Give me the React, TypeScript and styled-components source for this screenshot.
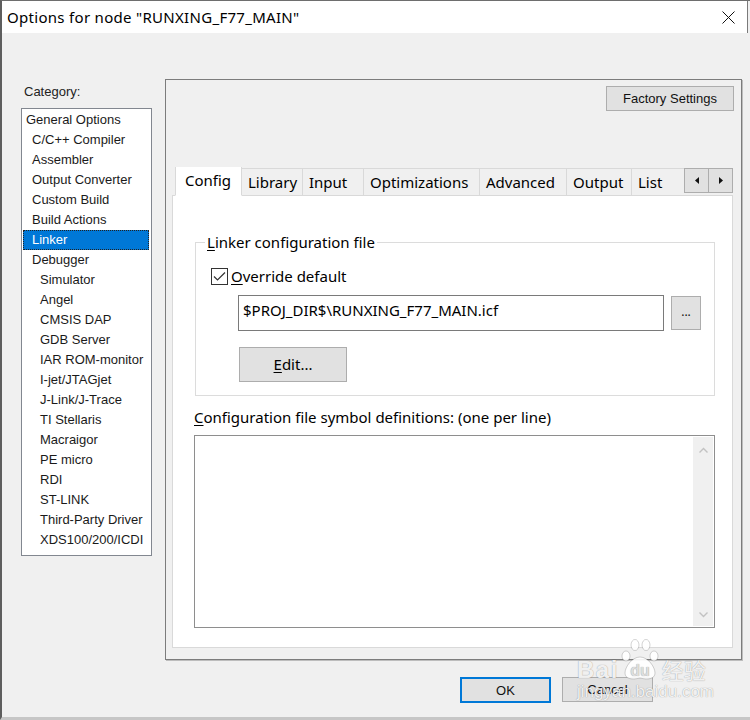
import styled, { createGlobalStyle } from "styled-components";

const GlobalStyle = createGlobalStyle`
  html, body {
    margin: 0;
    padding: 0;
    background: #f0f0f0;
  }
  * {
    box-sizing: border-box;
  }
`;

const uiFont = `"Noto Sans", "Noto Sans CJK SC", sans-serif`;
const smallFont = `"Liberation Sans", Arial, sans-serif`;

const Window = styled.div`
  position: relative;
  width: 750px;
  height: 720px;
  background: #f0f0f0;
  border-left: 2px solid #5e5e5e;
  border-top: 1px solid #6e6e6e;
  border-bottom: 3px solid #c6c6c6;
  display: flex;
  flex-direction: column;
  font-family: ${uiFont};
  color: #000;
  overflow: hidden;
`;

const TitleBar = styled.div`
  height: 32px;
  margin-right: 2px;
  background: #fff;
  border-right: 1px solid #7a7a7a;
  display: flex;
  align-items: center;
  justify-content: space-between;
  padding: 0 12px 0 5px;
  font-size: 15px;
`;

const TitleText = styled.span`
  letter-spacing: 0.3px;
`;

const CloseIcon = styled.svg`
  width: 13px;
  height: 13px;
  margin-top: 1px;
`;

const Body = styled.div`
  flex: 1;
  display: flex;
  flex-direction: column;
  padding: 46px 0 0 19px;
`;

const MainRow = styled.div`
  display: flex;
  align-items: flex-start;
`;

const LeftColumn = styled.div`
  width: 131px;
  margin-top: 5px;
  display: flex;
  flex-direction: column;
`;

const CategoryLabel = styled.div`
  height: 24px;
  padding-left: 3px;
  font-family: ${smallFont};
  font-size: 13px;
  line-height: 15px;
  color: #222;
`;

const ListBox = styled.div`
  height: 448px;
  background: #fff;
  border: 1px solid #828790;
  padding: 1px 2px 0 1px;
  font-family: ${smallFont};
  font-size: 13px;
`;

const ListItem = styled.div<{ $level: number; $selected?: boolean }>`
  height: 20px;
  line-height: 20px;
  padding-left: ${(p) => [3, 9, 17][p.$level]}px;
  white-space: nowrap;
  color: ${(p) => (p.$selected ? "#fff" : "#1a1a1a")};
  background: ${(p) => (p.$selected ? "#0078d7" : "transparent")};
  outline: ${(p) => (p.$selected ? "1px dotted #222" : "none")};
  outline-offset: -1px;
`;

const Panel = styled.div`
  margin-left: 13px;
  width: 577px;
  height: 581px;
  border: 1px solid #7c7c7c;
  box-shadow: 1px 1px 0 #bdbdbd;
  padding: 6px 7px 11px 6px;
  display: flex;
  flex-direction: column;
`;

const FactoryRow = styled.div`
  display: flex;
  justify-content: flex-end;
`;

const SmallButton = styled.button<{ $w: number; $default?: boolean }>`
  width: ${(p) => p.$w}px;
  height: ${(p) => (p.$default ? 26 : 25)}px;
  background: #e1e1e1;
  border: ${(p) => (p.$default ? "2px solid #0078d7" : "1px solid #adadad")};
  border-radius: 0;
  padding: 0;
  font-family: ${smallFont};
  font-size: 13px;
  color: #111;
`;

const TabStrip = styled.div`
  margin-top: 56px;
  margin-right: 1px;
  height: 29px;
  display: flex;
  align-items: flex-start;
  position: relative;
  z-index: 1;
  margin-bottom: -1px;
`;

const TabsTrack = styled.div`
  flex: 1;
  height: 29px;
  display: flex;
  align-items: flex-end;
  padding-left: 3px;
  overflow: hidden;
`;

const Tab = styled.div<{ $w: number; $active?: boolean }>`
  flex: none;
  width: ${(p) => p.$w}px;
  height: ${(p) => (p.$active ? 30 : 28)}px;
  margin-right: -1px;
  padding-left: ${(p) => (p.$active ? 9 : 6)}px;
  padding-bottom: ${(p) => (p.$active ? 3 : 0)}px;
  display: flex;
  align-items: center;
  background: ${(p) => (p.$active ? "#fff" : "#f0f0f0")};
  border: 1px solid #d9d9d9;
  border-bottom: ${(p) => (p.$active ? "1px solid #fff" : "1px solid #d9d9d9")};
  position: relative;
  z-index: ${(p) => (p.$active ? 2 : 1)};
  font-size: 15px;
  white-space: nowrap;
`;

const ScrollArrows = styled.div`
  display: flex;
  margin-top: 1px;
`;

const ArrowButton = styled.div`
  width: 25px;
  height: 25px;
  background: #e1e1e1;
  border: 1px solid #adadad;
  margin-left: -1px;
  display: flex;
  align-items: center;
  justify-content: center;
  &:first-child {
    margin-left: 0;
  }
`;

const TabPage = styled.div`
  flex: 1;
  margin-right: 1px;
  background: #fff;
  border: 1px solid #d9d9d9;
  padding: 0 17px 19px 22px;
  display: flex;
  flex-direction: column;
`;

const GroupBox = styled.fieldset`
  margin: 36px 0 0 0;
  padding: 0 0 13px 0;
  border: 1px solid #dcdcdc;
  min-width: 0;
`;

const GroupTitle = styled.legend`
  margin-left: 9px;
  padding: 0 2px;
  font-size: 15px;
  line-height: 20px;
`;

const Mnemonic = styled.span`
  text-decoration: underline;
  text-underline-offset: 2px;
`;

const CheckRow = styled.label`
  display: flex;
  align-items: center;
  margin: 16px 0 0 15px;
  font-size: 15px;
  line-height: 17px;
  gap: 3px;
`;

const CheckBox = styled.span`
  width: 17px;
  height: 17px;
  border: 1px solid #333;
  background: #fff;
  display: flex;
  align-items: center;
  justify-content: center;
`;

const FileRow = styled.div`
  display: flex;
  align-items: center;
  gap: 7px;
  margin: 10px 0 0 42px;
`;

const PathField = styled.div`
  width: 426px;
  height: 36px;
  border: 1px solid #7a7a7a;
  background: #fff;
  padding: 0 5px 6px 4px;
  display: flex;
  align-items: center;
  font-size: 15px;
`;

const BrowseButton = styled.button`
  width: 30px;
  height: 34px;
  background: #e1e1e1;
  border: 1px solid #adadad;
  border-radius: 0;
  padding: 0 0 4px;
  font-family: ${uiFont};
  font-size: 12px;
  color: #111;
`;

const EditButton = styled.button`
  margin: 16px 0 0 43px;
  width: 108px;
  height: 35px;
  background: #e1e1e1;
  border: 1px solid #adadad;
  border-radius: 0;
  padding: 0 0 2px;
  font-family: ${uiFont};
  font-size: 15px;
  color: #000;
`;

const FieldLabel = styled.div`
  margin: 11px 0 0 -1px;
  font-size: 15px;
  line-height: 20px;
`;

const SymbolArea = styled.div`
  margin: 8px 0 0 -1px;
  flex: 1;
  display: flex;
  justify-content: flex-end;
  border: 1px solid #8e8e8e;
  background: #fff;
  padding: 1px;
`;

const ScrollTrack = styled.div`
  width: 20px;
  background: #f0f0f0;
  display: flex;
  flex-direction: column;
  justify-content: space-between;
  align-items: center;
  padding: 10px 0 8px;
`;

const Footer = styled.div`
  display: flex;
  justify-content: flex-end;
  gap: 11px;
  margin-top: 17px;
  padding-right: 97px;
`;

const Watermark = styled.div`
  position: absolute;
  left: 575px;
  top: 636px;
  width: 150px;
  pointer-events: none;
  color: rgba(255, 255, 255, 0.9);
  text-shadow: 0 0 1px rgba(0, 0, 0, 0.45);
  font-family: ${smallFont};
`;

const WatermarkTop = styled.div`
  display: flex;
  align-items: flex-end;
  height: 44px;
`;

const WatermarkBrand = styled.span`
  font-size: 24px;
  font-weight: bold;
  line-height: 22px;
  letter-spacing: 1.5px;
`;

const WatermarkCjk = styled.span`
  font-family: "Noto Sans CJK SC", sans-serif;
  font-size: 22px;
  line-height: 24px;
  margin-left: 1px;
`;

const WatermarkUrl = styled.div`
  font-size: 17px;
  line-height: 18px;
  margin-top: 2px;
`;

const categories: { name: string; level: number; selected?: boolean }[] = [
  { name: "General Options", level: 0 },
  { name: "C/C++ Compiler", level: 1 },
  { name: "Assembler", level: 1 },
  { name: "Output Converter", level: 1 },
  { name: "Custom Build", level: 1 },
  { name: "Build Actions", level: 1 },
  { name: "Linker", level: 1, selected: true },
  { name: "Debugger", level: 1 },
  { name: "Simulator", level: 2 },
  { name: "Angel", level: 2 },
  { name: "CMSIS DAP", level: 2 },
  { name: "GDB Server", level: 2 },
  { name: "IAR ROM-monitor", level: 2 },
  { name: "I-jet/JTAGjet", level: 2 },
  { name: "J-Link/J-Trace", level: 2 },
  { name: "TI Stellaris", level: 2 },
  { name: "Macraigor", level: 2 },
  { name: "PE micro", level: 2 },
  { name: "RDI", level: 2 },
  { name: "ST-LINK", level: 2 },
  { name: "Third-Party Driver", level: 2 },
  { name: "XDS100/200/ICDI", level: 2 },
];

const tabs = [
  { name: "Config", w: 67, active: true },
  { name: "Library", w: 62 },
  { name: "Input", w: 62 },
  { name: "Optimizations", w: 117 },
  { name: "Advanced", w: 88 },
  { name: "Output", w: 66 },
  { name: "List", w: 60 },
];

export default function App() {
  return (
    <>
      <GlobalStyle />
      <Window>
        <TitleBar>
          <TitleText>Options for node "RUNXING_F77_MAIN"</TitleText>
          <CloseIcon viewBox="0 0 13 13">
            <path d="M0.5 0.5 L12.5 12.5 M12.5 0.5 L0.5 12.5" stroke="#111" strokeWidth="1" />
          </CloseIcon>
        </TitleBar>

        <Body>
          <MainRow>
            <LeftColumn>
              <CategoryLabel>Category:</CategoryLabel>
              <ListBox>
                {categories.map((c) => (
                  <ListItem key={c.name} $level={c.level} $selected={c.selected}>
                    {c.name}
                  </ListItem>
                ))}
              </ListBox>
            </LeftColumn>

            <Panel>
              <FactoryRow>
                <SmallButton $w={128}>Factory Settings</SmallButton>
              </FactoryRow>

              <TabStrip>
                <TabsTrack>
                  {tabs.map((t) => (
                    <Tab key={t.name} $w={t.w} $active={t.active}>
                      {t.name}
                    </Tab>
                  ))}
                </TabsTrack>
                <ScrollArrows>
                  <ArrowButton>
                    <svg width="4" height="7" viewBox="0 0 4 7">
                      <path d="M4 0 L0 3.5 L4 7 Z" fill="#111" />
                    </svg>
                  </ArrowButton>
                  <ArrowButton>
                    <svg width="4" height="7" viewBox="0 0 4 7">
                      <path d="M0 0 L4 3.5 L0 7 Z" fill="#111" />
                    </svg>
                  </ArrowButton>
                </ScrollArrows>
              </TabStrip>

              <TabPage>
                <GroupBox>
                  <GroupTitle>
                    <Mnemonic>L</Mnemonic>inker configuration file
                  </GroupTitle>
                  <CheckRow>
                    <CheckBox>
                      <svg width="13" height="11" viewBox="0 0 13 11">
                        <path d="M1 5.5 L4.5 9 L12 1.5" fill="none" stroke="#333" strokeWidth="1.2" />
                      </svg>
                    </CheckBox>
                    <span>
                      <Mnemonic>O</Mnemonic>verride default
                    </span>
                  </CheckRow>
                  <FileRow>
                    <PathField>$PROJ_DIR$\RUNXING_F77_MAIN.icf</PathField>
                    <BrowseButton>...</BrowseButton>
                  </FileRow>
                  <EditButton>
                    <Mnemonic>E</Mnemonic>dit...
                  </EditButton>
                </GroupBox>

                <FieldLabel>
                  <Mnemonic>C</Mnemonic>onfiguration file symbol definitions: (one per line)
                </FieldLabel>
                <SymbolArea>
                  <ScrollTrack>
                    <svg width="9" height="6" viewBox="0 0 9 6">
                      <path d="M0.5 5.5 L4.5 1.5 L8.5 5.5" fill="none" stroke="#c2c2c2" strokeWidth="1.4" />
                    </svg>
                    <svg width="9" height="6" viewBox="0 0 9 6">
                      <path d="M0.5 0.5 L4.5 4.5 L8.5 0.5" fill="none" stroke="#c2c2c2" strokeWidth="1.4" />
                    </svg>
                  </ScrollTrack>
                </SymbolArea>
              </TabPage>
            </Panel>
          </MainRow>

          <Footer>
            <SmallButton $w={91} $default>
              OK
            </SmallButton>
            <SmallButton $w={91}>Cancel</SmallButton>
          </Footer>
        </Body>

        <Watermark>
          <WatermarkTop>
            <WatermarkBrand>Bai</WatermarkBrand>
            <svg width="42" height="44" viewBox="0 0 42 44">
              <g fill="rgba(255,255,255,0.9)" stroke="rgba(0,0,0,0.22)" strokeWidth="0.8">
                <ellipse cx="7" cy="19" rx="4" ry="5" />
                <ellipse cx="16" cy="8" rx="4" ry="5.5" />
                <ellipse cx="27" cy="8" rx="4" ry="5.5" />
                <ellipse cx="35" cy="19" rx="4" ry="5" />
                <path d="M21 20 C13 20 6 30 6 36 C6 42 13 43 21 41 C29 43 36 42 36 36 C36 30 29 20 21 20 Z" />
              </g>
              <text x="21" y="39" textAnchor="middle" fontSize="16" fontWeight="bold" fill="#dedede" fontFamily="Liberation Sans, Arial, sans-serif">du</text>
            </svg>
            <WatermarkCjk>经验</WatermarkCjk>
          </WatermarkTop>
          <WatermarkUrl>jingyan.baidu.com</WatermarkUrl>
        </Watermark>
      </Window>
    </>
  );
}
